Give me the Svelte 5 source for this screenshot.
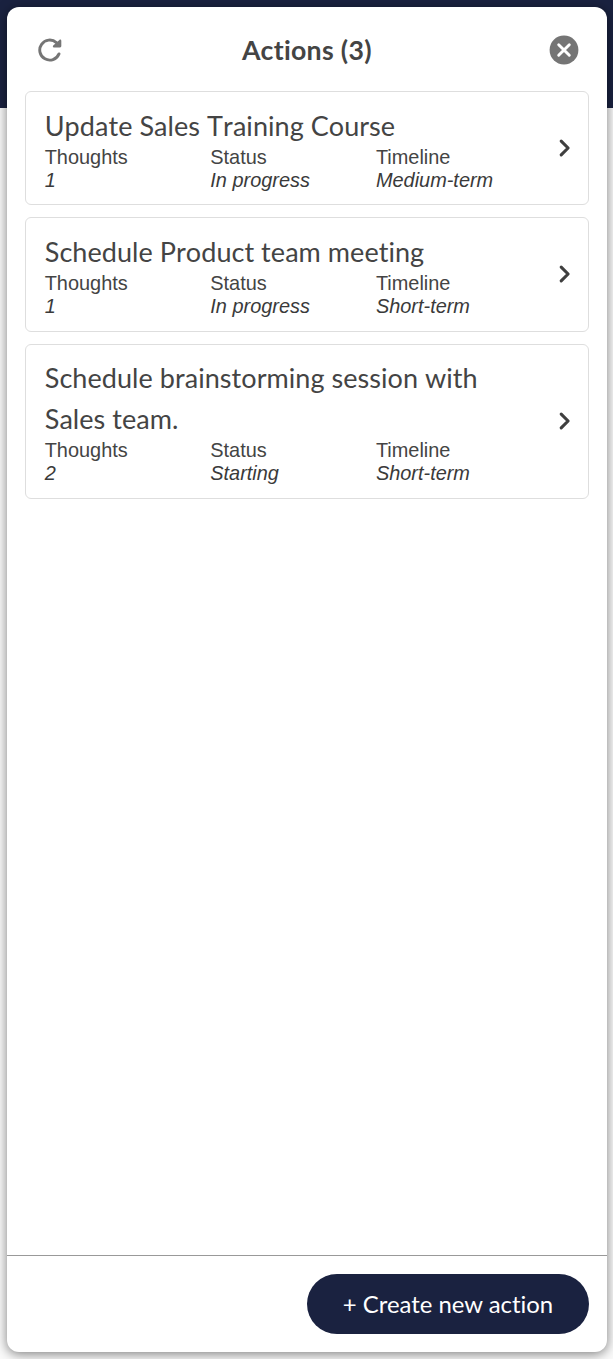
<!--
  Actions panel — floating card listing every action, with a refresh and a
  close control on top and the create button pinned to the bottom.
-->
<script lang="ts">
	interface Action {
		title: string;
		thoughts: number;
		status: string;
		timeline: string;
	}

	const actions: Action[] = [
		{
			title: 'Update Sales Training Course',
			thoughts: 1,
			status: 'In progress',
			timeline: 'Medium-term'
		},
		{
			title: 'Schedule Product team meeting',
			thoughts: 1,
			status: 'In progress',
			timeline: 'Short-term'
		},
		{
			title: 'Schedule brainstorming session with Sales team.',
			thoughts: 2,
			status: 'Starting',
			timeline: 'Short-term'
		}
	];
</script>

<div class="page">
	<section class="panel">
		<header class="panel-header">
			<button type="button" class="icon-btn" aria-label="Refresh">
				<svg width="24" height="24" viewBox="0 0 24 24" aria-hidden="true">
					<path
						d="M21 15.9A10 10 0 1 1 18.4 4.6"
						fill="none"
						stroke="currentColor"
						stroke-width="2.9"
						stroke-linecap="round"
					/>
					<path
						d="M21.4 1.9 15.2 7.5c-.7.8-.3 1.9.6 1.9h6.2c.8 0 1.3-.5 1.3-1.3V2.7c0-1-1.1-1.5-1.9-.8Z"
						fill="currentColor"
					/>
				</svg>
			</button>
			<h1>Actions ({actions.length})</h1>
			<button type="button" class="icon-btn" aria-label="Close">
				<svg width="30" height="30" viewBox="0 0 30 30" aria-hidden="true">
					<circle cx="15" cy="15" r="14.4" fill="currentColor" />
					<path
						d="m9.7 9.7 10.6 10.6M20.3 9.7 9.7 20.3"
						stroke="#fff"
						stroke-width="2.9"
						stroke-linecap="round"
					/>
				</svg>
			</button>
		</header>

		<ul class="list">
			{#each actions as action}
				<li class="card">
					<div class="card-body">
						<h2>{action.title}</h2>
						<dl>
							<div>
								<dt>Thoughts</dt>
								<dd>{action.thoughts}</dd>
							</div>
							<div>
								<dt>Status</dt>
								<dd>{action.status}</dd>
							</div>
							<div>
								<dt>Timeline</dt>
								<dd>{action.timeline}</dd>
							</div>
						</dl>
					</div>
					<svg class="chevron" width="12" height="18" viewBox="0 0 12 18" aria-hidden="true">
						<path
							d="m2.2 2.2 6.9 6.8-6.9 6.8"
							fill="none"
							stroke="currentColor"
							stroke-width="3.1"
							stroke-linecap="round"
							stroke-linejoin="round"
						/>
					</svg>
				</li>
			{/each}
		</ul>

		<footer class="panel-footer">
			<button type="button" class="create-btn">+ Create new action</button>
		</footer>
	</section>
</div>

<style>
	:global(body) {
		background: #fff;
	}

	/* Navy app bar shows behind the top of the panel. */
	.page {
		box-sizing: border-box;
		width: 613px;
		height: 1359px;
		padding: 7px 6px 7px 7px;
		overflow: hidden;
		background: linear-gradient(#1a2240 108px, #fafafa 108px);
		font-family: 'Liberation Sans', Arial, sans-serif;
		font-variant-ligatures: none;
		color: #444;
	}

	.panel {
		display: flex;
		flex-direction: column;
		height: 1345px;
		background: #fff;
		border-radius: 12px;
		box-shadow: 0 2px 12px rgba(0, 0, 0, 0.5);
	}

	button {
		margin: 0;
		padding: 0;
		border: 0;
		background: none;
		cursor: pointer;
	}

	.panel-header {
		box-sizing: border-box;
		display: flex;
		align-items: center;
		justify-content: space-between;
		height: 84px;
		padding: 2px 27.5px 0 31px;
	}
	.icon-btn {
		display: grid;
		place-items: center;
		color: #757575;
	}
	h1 {
		margin: 0;
		padding-left: 2.4px;
		font: 700 26.7px/40px Lato, sans-serif;
		font-variant-ligatures: none;
		letter-spacing: 0.3px;
	}

	.list {
		flex: 1;
		display: flex;
		flex-direction: column;
		gap: 12px;
		margin: 0;
		padding: 0 18px;
		list-style: none;
	}
	.card {
		display: flex;
		align-items: center;
		padding: 12.65px 17px 12.7px 18.7px;
		border: 1px solid #dedede;
		border-radius: 6px;
	}
	.card-body {
		flex: 1;
	}
	h2 {
		max-width: 470px;
		margin: 0;
		font: 400 27px/41px Lato, sans-serif;
		font-variant-ligatures: none;
		font-kerning: none;
		letter-spacing: 0.05px;
	}
	dl {
		display: grid;
		grid-template-columns: repeat(3, 165.6px);
		margin: 0;
		font-size: 19.93px;
		line-height: 23px;
	}
	dd {
		margin: 0;
		font-style: italic;
		color: #3a3a3a;
	}
	.chevron {
		flex: none;
		color: #3f3f3f;
	}

	.panel-footer {
		display: flex;
		justify-content: flex-end;
		padding: 18px;
		border-top: 1px solid #999;
	}
	.create-btn {
		width: 282px;
		height: 60px;
		border-radius: 30px;
		background: #1a2240;
		font: 400 23.9px/60px Lato, sans-serif;
		font-variant-ligatures: none;
		color: #fff;
	}
</style>
